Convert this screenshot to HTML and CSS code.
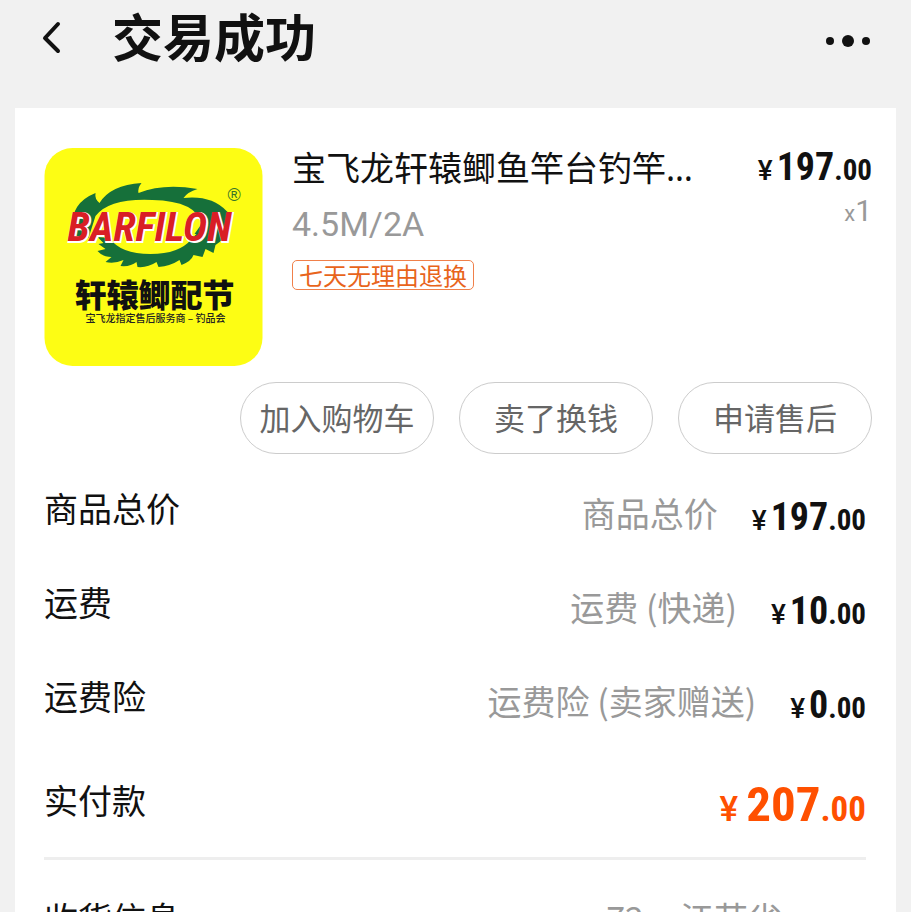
FILE: index.html
```html
<!DOCTYPE html>
<html lang="zh-CN">

<head>
    <meta charset="UTF-8">
    <meta name="viewport" content="width=device-width, initial-scale=1.0">
    <title>交易成功</title>
    <link rel="stylesheet" href="styles.css">
</head>

<body>
    <header class="header">
        <button class="icon-btn back" aria-label="返回">
            <svg width="22" height="36" viewBox="0 0 22 36">
                <path d="M18 4 L5 18 L18 31" fill="none" stroke="#111" stroke-width="4" stroke-linecap="round" stroke-linejoin="round" />
            </svg>
        </button>
        <h1 class="title">交易成功</h1>
        <button class="icon-btn more" aria-label="更多">
            <svg width="44" height="14" viewBox="0 0 44 14">
                <circle cx="4" cy="7" r="4" fill="#111" />
                <circle cx="22" cy="7" r="6" fill="#111" />
                <circle cx="40" cy="7" r="4" fill="#111" />
            </svg>
        </button>
    </header>

    <main class="card">
        <section class="product">
            <svg class="thumb" viewBox="0 0 218 218">
                <rect width="218" height="218" rx="28" fill="#fdfd14" />
                <!-- toothed green ring -->
                <path fill="#16703a" d="M28 80 Q26 55 51 45 Q50 51 55 55 Q66 37 97 35 Q93 40 94 45 Q119 35 153 41 Q143 44 139 50 Q167 47 182 63 L188 68 L178 94 L174 86 L150 86 L157 76 Q152 53 108 52 Q65 50 51 68 L44 90 L30 90 Z" />
                <path fill="#16703a" d="M53 89 L65 90 Q76 106 106 106 Q135 106 147 91 L152 86 L180 84 Q181 91 171 97 L169 105 L161 101 L158 109 L149 107 Q147 113 137 117 L135 112 Q126 118 114 119 L112 114 Q103 120 93 119 L92 114 Q86 119 76 118 L79 112 Q70 116 61 114 L67 109 Q58 109 53 103 L61 101 L54 96 L59 95 Z" />
                <text class="logo-name" x="24" y="94" fill="#fff" stroke="#fff" stroke-width="2">BARFILON</text>
                <text class="logo-name" x="23" y="93" fill="#d91e25">BARFILON</text>
                <text class="logo-reg" x="183" y="53" fill="#38752a">®</text>
                <text class="logo-main" x="30" y="159" fill="#111">轩辕鲫配节</text>
                <text class="logo-sub" x="41" y="174" fill="#222">宝飞龙指定售后服务商 – 钓品会</text>
            </svg>
            <div class="info">
                <h2 class="name">宝飞龙轩辕鲫鱼竿台钓竿…</h2>
                <p class="spec">4.5M/2A</p>
                <span class="tag">七天无理由退换</span>
            </div>
            <div class="cost">
                <div class="price"><span class="yen">¥</span><span class="num">197</span><span class="dec">.00</span></div>
                <div class="count"><small>x</small>1</div>
            </div>
        </section>

        <div class="actions">
            <button class="btn">加入购物车</button>
            <button class="btn">卖了换钱</button>
            <button class="btn">申请售后</button>
        </div>

        <dl class="summary">
            <div class="row">
                <dt>商品总价</dt>
                <dd><span class="note">商品总价</span>
                    <div class="price"><span class="yen">¥</span><span class="num">197</span><span class="dec">.00</span></div>
                </dd>
            </div>
            <div class="row">
                <dt>运费</dt>
                <dd><span class="note">运费 (快递)</span>
                    <div class="price"><span class="yen">¥</span><span class="num">10</span><span class="dec">.00</span></div>
                </dd>
            </div>
            <div class="row">
                <dt>运费险</dt>
                <dd><span class="note">运费险 (卖家赠送)</span>
                    <div class="price"><span class="yen">¥</span><span class="num">0</span><span class="dec">.00</span></div>
                </dd>
            </div>
            <div class="row total">
                <dt>实付款</dt>
                <dd>
                    <div class="price"><span class="yen">¥</span><span class="num">207</span><span class="dec">.00</span></div>
                </dd>
            </div>
        </dl>

        <div class="address">
            <span>收货信息</span>
            <span class="region"><span>72</span><span>江苏省</span></span>
        </div>
    </main>
</body>

</html>
```
FILE: styles.css
```css
* {
    box-sizing: border-box;
}

body {
    margin: 0;
    height: 100vh;
    overflow: hidden;
    display: flex;
    flex-direction: column;
    background-color: #f1f1f1;
    font-family: "Noto Sans CJK SC", sans-serif;
    color: #111;
}

h1,
h2,
p,
dl,
dd {
    margin: 0;
}

button {
    font-family: inherit;
    cursor: pointer;
}

.header {
    display: flex;
    align-items: center;
    height: 108px;
    padding: 0 41px 32px 40px;
    flex-shrink: 0;
}

.icon-btn {
    display: flex;
    padding: 0;
    border: 0;
    background: none;
}

.more {
    margin-top: 6px;
}

.title {
    flex: 1;
    margin-left: 50px;
    padding-bottom: 6px;
    font-size: 51px;
    line-height: 70px;
    font-weight: 700;
}

.card {
    flex: 1 0 auto;
    margin: 0 15px;
    padding: 40px 24px 0 29px;
    background-color: #fff;
}

.product {
    display: flex;
    align-items: flex-start;
}

.thumb {
    width: 219px;
    height: 218px;
    flex-shrink: 0;
}

.logo-name {
    font: italic 700 41px "Roboto Condensed", Roboto, sans-serif;
}

.logo-reg {
    font: 18px "Liberation Sans", sans-serif;
}

.logo-main {
    font-size: 32px;
    font-weight: 900;
}

.logo-sub {
    font-size: 10px;
    font-weight: 500;
}

.info {
    flex: 1;
    min-width: 0;
    margin-left: 29px;
}

.name {
    overflow: hidden;
    white-space: nowrap;
    text-overflow: ellipsis;
    font-family: "Noto Sans", "Noto Sans CJK SC", sans-serif;
    font-size: 34px;
    line-height: 40px;
    font-weight: 400;
}

.spec {
    margin: 16px 0;
    font-family: Roboto, sans-serif;
    font-size: 34px;
    line-height: 40px;
    color: #999;
}

.tag {
    display: block;
    width: fit-content;
    padding: 0 6px;
    border: 1px solid #f0804a;
    border-radius: 5px;
    font-size: 24px;
    line-height: 28px;
    color: #e8641b;
}

.cost {
    text-align: right;
}

.price {
    font-family: "Roboto Condensed", Roboto, sans-serif;
    font-weight: 700;
    line-height: 38px;
    white-space: nowrap;
}

.yen {
    margin-right: 4px;
    font-family: Roboto, sans-serif;
    font-size: 28px;
    font-weight: 500;
}

.num {
    font-size: 38px;
}

.dec {
    font-size: 29px;
}

.count {
    font-family: Roboto, sans-serif;
    font-size: 30px;
    line-height: 34px;
    color: #999;
}

.count small {
    font-size: 22px;
}

.actions {
    display: flex;
    justify-content: flex-end;
    gap: 25px;
    margin-top: 16px;
}

.btn {
    width: 194px;
    height: 72px;
    padding: 0 0 2px;
    border: 1px solid #ccc;
    border-radius: 36px;
    background-color: #fff;
    font-size: 31px;
    line-height: 44px;
    color: #666;
}

.summary {
    display: flex;
    flex-direction: column;
    gap: 44px;
    margin-right: 6px;
    padding: 29px 0 32px;
    border-bottom: 3px solid #eee;
}

.row {
    display: flex;
    justify-content: space-between;
    height: 50px;
    font-size: 34px;
    line-height: 50px;
}

.row dd {
    display: flex;
    align-items: flex-start;
    gap: 34px;
    padding-top: 5px;
}

.row .price {
    margin-top: 4px;
    line-height: 50px;
}

.note {
    color: #999;
}

.total {
    margin-top: 10px;
}

.total .price {
    margin-top: 0;
    color: #ff5000;
}

.total .yen,
.total .dec {
    font-size: 35px;
}

.total .yen {
    margin-right: 8px;
}

.total .num {
    font-size: 49px;
}

.address {
    display: flex;
    justify-content: space-between;
    padding: 33px 90px 0 0;
    font-size: 34px;
    line-height: 50px;
}

.region {
    display: flex;
    gap: 36px;
    color: #999;
}
```
